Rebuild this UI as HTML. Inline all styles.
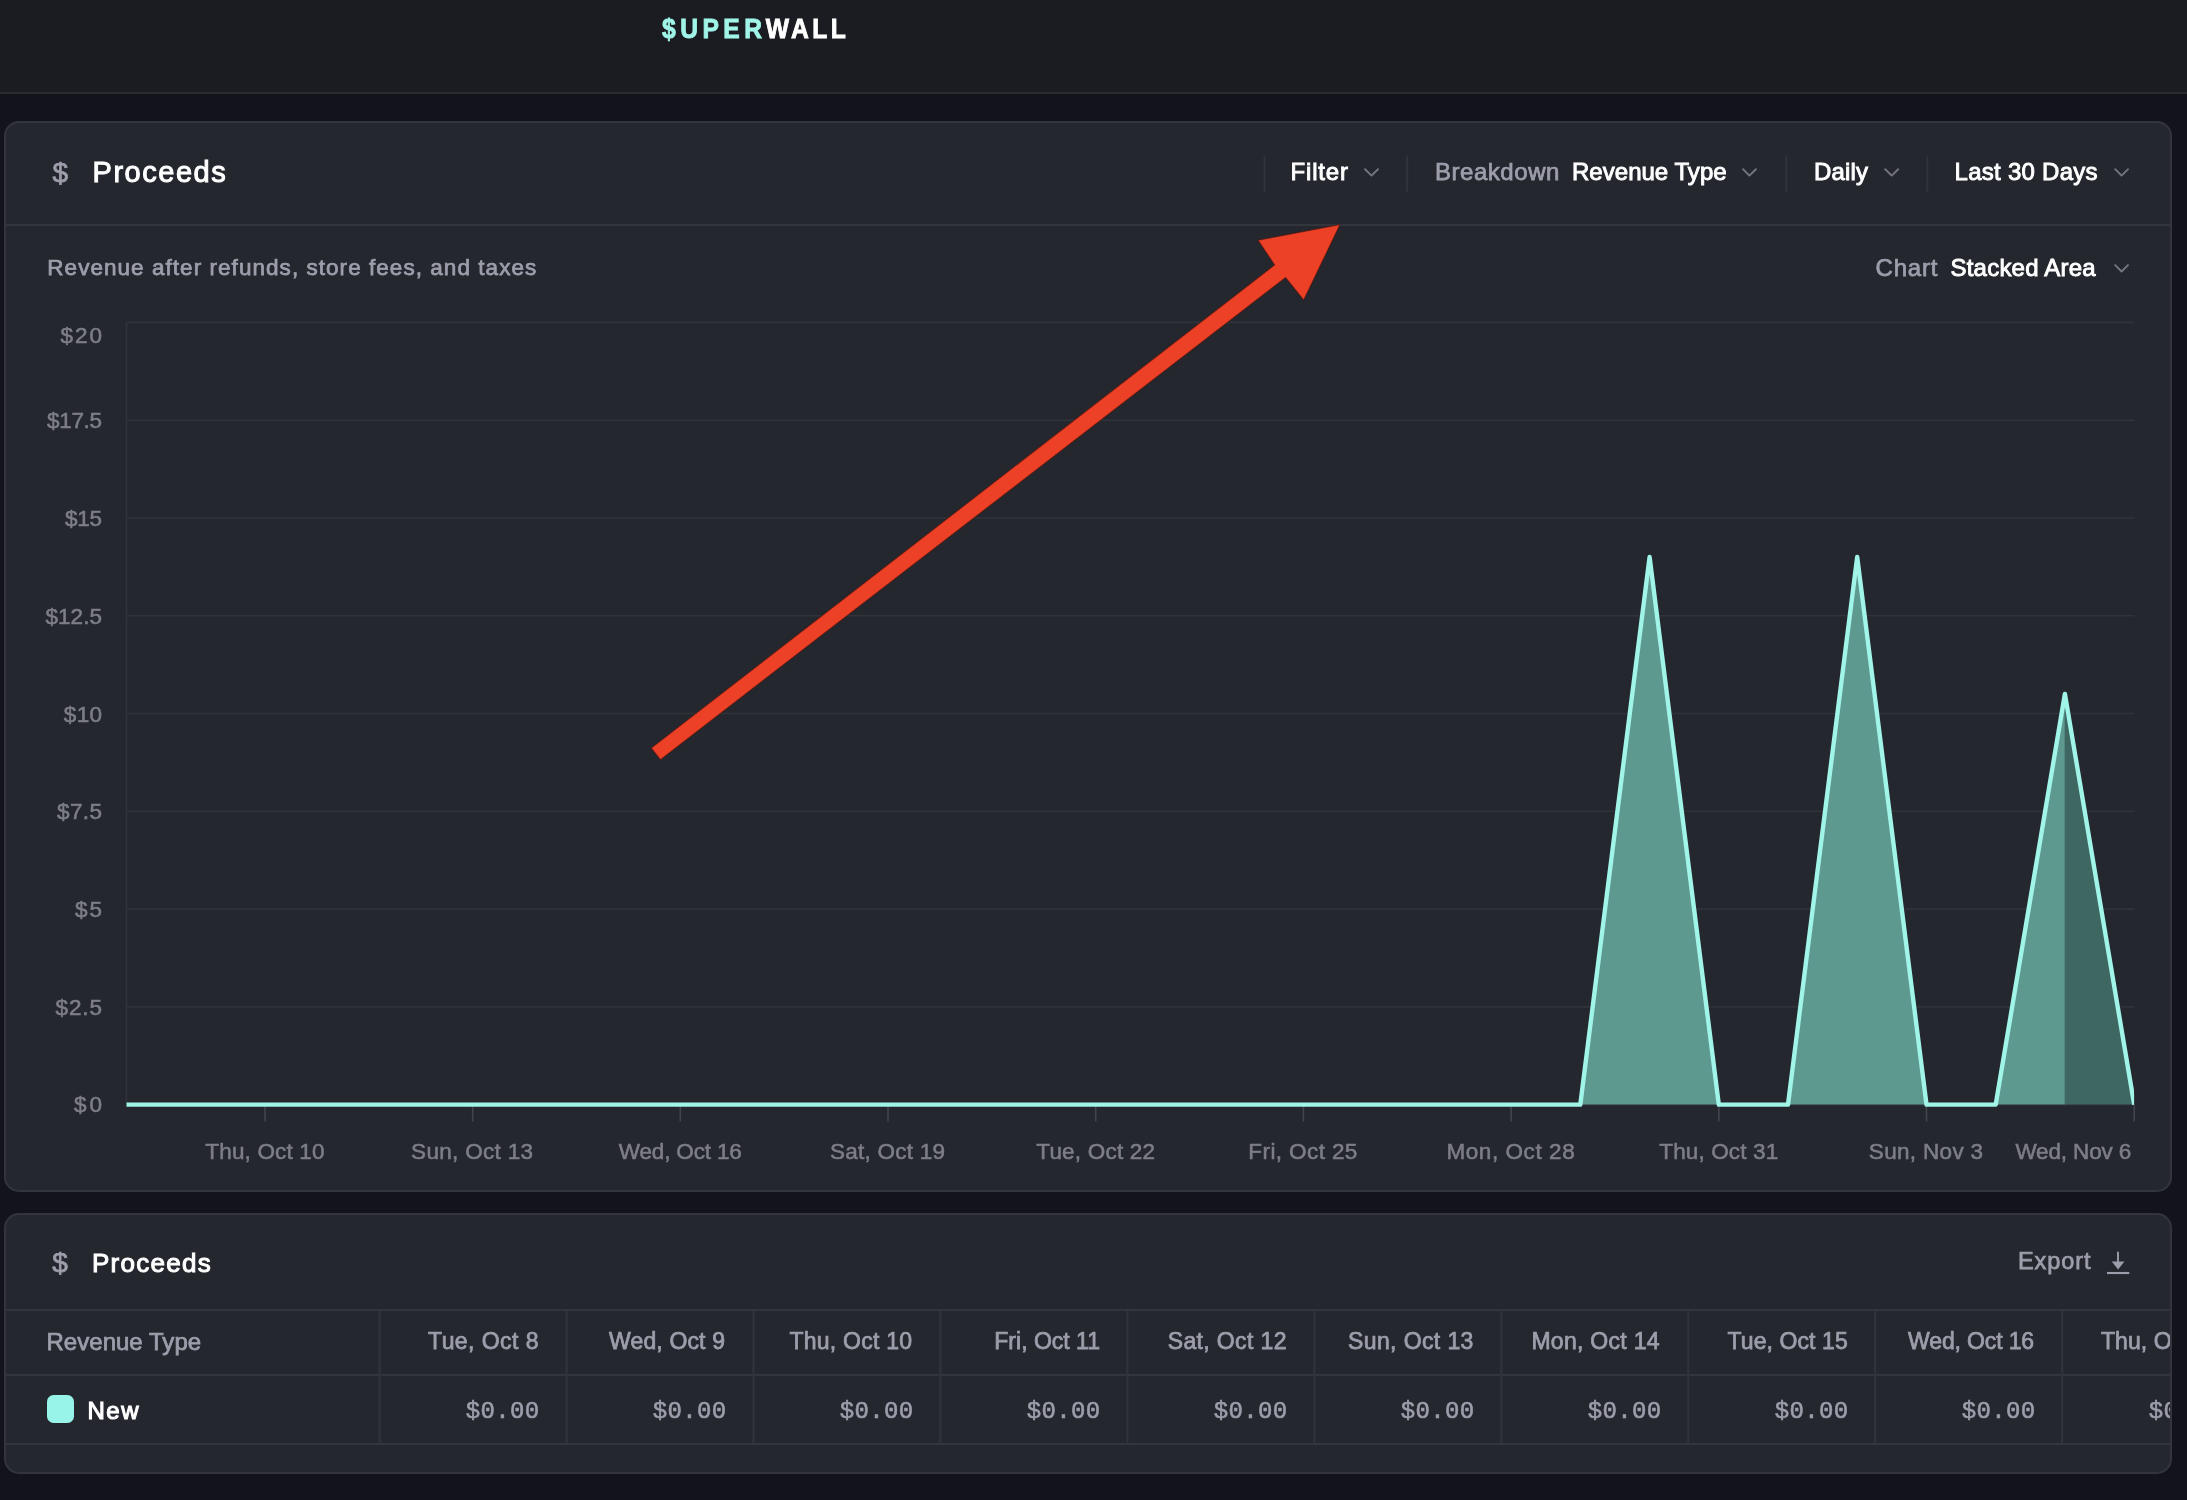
<!DOCTYPE html>
<html lang="en"><head><meta charset="utf-8"><title>Superwall - Proceeds</title><style>
html,body{margin:0;padding:0}
body{width:2187px;height:1500px;overflow:hidden;position:relative;background:#13141b;font-family:"Liberation Sans", sans-serif}
.t{position:absolute;white-space:nowrap;display:block;-webkit-text-stroke:0.75px currentColor}
.s{font-family:"Liberation Sans", sans-serif}
.m{font-family:"Liberation Mono", monospace}
.top{position:absolute;left:0;top:0;width:2187px;height:91.5px;background:#1b1c21;border-bottom:2px solid #2a2b32}
.card{position:absolute;box-sizing:border-box;background:#25272f;border:2px solid #33353d;border-radius:15px;overflow:hidden}
.hl{position:absolute;left:0;right:0;height:2px;background:#33353d}
.vl{position:absolute;width:2px;background:#33353d}
.sw{position:absolute;left:47px;top:1395.2px;width:27.3px;height:27.6px;border-radius:6.5px;background:#98f3e8}
</style></head>
<body>
<div class="top"></div>
<div class="card" style="left:4px;top:121px;width:2168px;height:1071px"><div class="hl" style="top:101px"></div></div>
<div class="card" style="left:4px;top:1213px;width:2168px;height:261px"><div class="hl" style="top:94px"></div><div class="hl" style="top:159px"></div><div class="hl" style="top:227.5px"></div></div>
<div class="sw"></div>
<svg width="2187" height="1500" viewBox="0 0 2187 1500" style="position:absolute;left:0;top:0">
<line x1="126.5" y1="322.4" x2="2134.5" y2="322.4" stroke="#31333b" stroke-width="1.6"/>
<line x1="126.5" y1="420.2" x2="2134.5" y2="420.2" stroke="#31333b" stroke-width="1.6"/>
<line x1="126.5" y1="518.0" x2="2134.5" y2="518.0" stroke="#31333b" stroke-width="1.6"/>
<line x1="126.5" y1="615.7" x2="2134.5" y2="615.7" stroke="#31333b" stroke-width="1.6"/>
<line x1="126.5" y1="713.5" x2="2134.5" y2="713.5" stroke="#31333b" stroke-width="1.6"/>
<line x1="126.5" y1="811.3" x2="2134.5" y2="811.3" stroke="#31333b" stroke-width="1.6"/>
<line x1="126.5" y1="909.1" x2="2134.5" y2="909.1" stroke="#31333b" stroke-width="1.6"/>
<line x1="126.5" y1="1006.9" x2="2134.5" y2="1006.9" stroke="#31333b" stroke-width="1.6"/>
<line x1="126.5" y1="1104.6" x2="2134.5" y2="1104.6" stroke="#31333b" stroke-width="1.6"/>
<line x1="126.5" y1="322.4" x2="126.5" y2="1104.6" stroke="#31333b" stroke-width="1.6"/>
<line x1="265.0" y1="1104" x2="265.0" y2="1121.5" stroke="#42444c" stroke-width="1.6"/>
<line x1="472.7" y1="1104" x2="472.7" y2="1121.5" stroke="#42444c" stroke-width="1.6"/>
<line x1="680.3" y1="1104" x2="680.3" y2="1121.5" stroke="#42444c" stroke-width="1.6"/>
<line x1="888.0" y1="1104" x2="888.0" y2="1121.5" stroke="#42444c" stroke-width="1.6"/>
<line x1="1095.7" y1="1104" x2="1095.7" y2="1121.5" stroke="#42444c" stroke-width="1.6"/>
<line x1="1303.4" y1="1104" x2="1303.4" y2="1121.5" stroke="#42444c" stroke-width="1.6"/>
<line x1="1511.1" y1="1104" x2="1511.1" y2="1121.5" stroke="#42444c" stroke-width="1.6"/>
<line x1="1718.8" y1="1104" x2="1718.8" y2="1121.5" stroke="#42444c" stroke-width="1.6"/>
<line x1="1926.5" y1="1104" x2="1926.5" y2="1121.5" stroke="#42444c" stroke-width="1.6"/>
<line x1="2134.2" y1="1104" x2="2134.2" y2="1121.5" stroke="#42444c" stroke-width="1.6"/>
<clipPath id="cc"><rect x="124.5" y="300" width="2009.6" height="807.5"/></clipPath>
<g clip-path="url(#cc)">
<polygon points="126.5,1104.6 126.5,1104.6 195.7,1104.6 265.0,1104.6 334.2,1104.6 403.4,1104.6 472.7,1104.6 541.9,1104.6 611.1,1104.6 680.3,1104.6 749.6,1104.6 818.8,1104.6 888.0,1104.6 957.3,1104.6 1026.5,1104.6 1095.7,1104.6 1165.0,1104.6 1234.2,1104.6 1303.4,1104.6 1372.6,1104.6 1441.9,1104.6 1511.1,1104.6 1580.3,1104.6 1649.6,557.0 1718.8,1104.6 1788.0,1104.6 1857.2,557.0 1926.5,1104.6 1995.7,1104.6 2064.9,693.9 2064.9,1104.6" fill="#5e9990"/>
<polygon points="2064.9,1104.6 2064.9,693.9 2134.2,1104.6" fill="#3e6762"/>
<polyline points="126.5,1104.6 195.7,1104.6 265.0,1104.6 334.2,1104.6 403.4,1104.6 472.7,1104.6 541.9,1104.6 611.1,1104.6 680.3,1104.6 749.6,1104.6 818.8,1104.6 888.0,1104.6 957.3,1104.6 1026.5,1104.6 1095.7,1104.6 1165.0,1104.6 1234.2,1104.6 1303.4,1104.6 1372.6,1104.6 1441.9,1104.6 1511.1,1104.6 1580.3,1104.6 1649.6,557.0 1718.8,1104.6 1788.0,1104.6 1857.2,557.0 1926.5,1104.6 1995.7,1104.6 2064.9,693.9 2134.2,1104.6" fill="none" stroke="#a0f4e8" stroke-width="4.4" stroke-linejoin="round" stroke-linecap="butt"/>
</g>
<line x1="379.60" y1="1311" x2="379.60" y2="1444" stroke="#31333b" stroke-width="2.1"/>
<line x1="566.55" y1="1311" x2="566.55" y2="1444" stroke="#31333b" stroke-width="2.1"/>
<line x1="753.50" y1="1311" x2="753.50" y2="1444" stroke="#31333b" stroke-width="2.1"/>
<line x1="940.45" y1="1311" x2="940.45" y2="1444" stroke="#31333b" stroke-width="2.1"/>
<line x1="1127.40" y1="1311" x2="1127.40" y2="1444" stroke="#31333b" stroke-width="2.1"/>
<line x1="1314.35" y1="1311" x2="1314.35" y2="1444" stroke="#31333b" stroke-width="2.1"/>
<line x1="1501.30" y1="1311" x2="1501.30" y2="1444" stroke="#31333b" stroke-width="2.1"/>
<line x1="1688.25" y1="1311" x2="1688.25" y2="1444" stroke="#31333b" stroke-width="2.1"/>
<line x1="1875.20" y1="1311" x2="1875.20" y2="1444" stroke="#31333b" stroke-width="2.1"/>
<line x1="2062.15" y1="1311" x2="2062.15" y2="1444" stroke="#31333b" stroke-width="2.1"/>
<path d="M1365.0 169.2 L1371.5 175.6 L1378.0 169.2" fill="none" stroke="#74757f" stroke-width="1.9" stroke-linecap="round" stroke-linejoin="round"/>
<path d="M1743.0 169.2 L1749.4 175.6 L1755.9 169.2" fill="none" stroke="#74757f" stroke-width="1.9" stroke-linecap="round" stroke-linejoin="round"/>
<path d="M1885.2 169.2 L1891.7 175.6 L1898.2 169.2" fill="none" stroke="#74757f" stroke-width="1.9" stroke-linecap="round" stroke-linejoin="round"/>
<path d="M2115.2 169.2 L2121.6 175.6 L2128.0 169.2" fill="none" stroke="#74757f" stroke-width="1.9" stroke-linecap="round" stroke-linejoin="round"/>
<path d="M2115.2 265.1 L2121.6 271.5 L2128.0 265.1" fill="none" stroke="#74757f" stroke-width="1.9" stroke-linecap="round" stroke-linejoin="round"/>
<line x1="1264.5" y1="155.5" x2="1264.5" y2="191.8" stroke="#31333b" stroke-width="2"/>
<line x1="1407.2" y1="155.5" x2="1407.2" y2="191.8" stroke="#31333b" stroke-width="2"/>
<line x1="1786.3" y1="155.5" x2="1786.3" y2="191.8" stroke="#31333b" stroke-width="2"/>
<line x1="1927.3" y1="155.5" x2="1927.3" y2="191.8" stroke="#31333b" stroke-width="2"/>
<g stroke="#9d9eab" fill="none" stroke-linecap="butt"><path d="M2118 1251.8 V1263" stroke-width="1.9"/><path d="M2107 1273 H2129.3" stroke-width="2.1"/><polygon points="2111.8,1261.4 2124.4,1261.4 2118.1,1269.4" fill="#9d9eab" stroke="none"/></g>
<polygon points="651.3,748.1 1274.6,264.9 1258,240.2 1340,224.6 1303.7,300.1 1285.6,277.5 660.4,759.7" fill="#ec4126" stroke="#4a130b" stroke-opacity="0.55" stroke-width="1.2" stroke-linejoin="miter"/>
</svg>
<div style="position:absolute;left:0;top:0;width:2170px;height:1500px;overflow:hidden;will-change:transform"><span class="t s" style="left:52.40px;top:154.80px;font-size:28px;line-height:36px;letter-spacing:0.000px;color:#9d9eab">$</span>
<span class="t s" style="left:92.60px;top:153.02px;font-size:29px;line-height:38px;letter-spacing:1.512px;color:#ffffff;-webkit-text-stroke-width:1.0px">Proceeds</span>
<span class="t s" style="left:1290.50px;top:156.13px;font-size:24px;line-height:31px;letter-spacing:0.832px;color:#ffffff;-webkit-text-stroke-width:0.9px">Filter</span>
<span class="t s" style="left:1435.00px;top:156.13px;font-size:24px;line-height:31px;letter-spacing:0.535px;color:#9d9eab">Breakdown</span>
<span class="t s" style="left:1572.00px;top:156.13px;font-size:24px;line-height:31px;letter-spacing:0.025px;color:#ffffff;-webkit-text-stroke-width:0.9px">Revenue Type</span>
<span class="t s" style="left:1814.00px;top:156.13px;font-size:24px;line-height:31px;letter-spacing:0.139px;color:#ffffff;-webkit-text-stroke-width:0.9px">Daily</span>
<span class="t s" style="left:1954.60px;top:156.13px;font-size:24px;line-height:31px;letter-spacing:0.266px;color:#ffffff;-webkit-text-stroke-width:0.9px">Last 30 Days</span>
<span class="t s" style="left:47.30px;top:253.10px;font-size:22.5px;line-height:29px;letter-spacing:1.045px;color:#9d9eab">Revenue after refunds, store fees, and taxes</span>
<span class="t s" style="left:1875.50px;top:252.43px;font-size:24px;line-height:31px;letter-spacing:0.820px;color:#9d9eab">Chart</span>
<span class="t s" style="left:1950.50px;top:252.23px;font-size:24px;line-height:31px;letter-spacing:0.215px;color:#ffffff;-webkit-text-stroke-width:0.9px">Stacked Area</span>
<span class="t s" style="left:60.50px;top:320.70px;font-size:22.5px;line-height:29px;letter-spacing:1.987px;color:#7d7e87;-webkit-text-stroke-width:0.55px">$20</span>
<span class="t s" style="left:47.00px;top:406.20px;font-size:22.5px;line-height:29px;letter-spacing:-0.323px;color:#7d7e87;-webkit-text-stroke-width:0.55px">$17.5</span>
<span class="t s" style="left:65.00px;top:504.00px;font-size:22.5px;line-height:29px;letter-spacing:-0.263px;color:#7d7e87;-webkit-text-stroke-width:0.55px">$15</span>
<span class="t s" style="left:45.40px;top:601.70px;font-size:22.5px;line-height:29px;letter-spacing:0.077px;color:#7d7e87;-webkit-text-stroke-width:0.55px">$12.5</span>
<span class="t s" style="left:63.80px;top:699.50px;font-size:22.5px;line-height:29px;letter-spacing:0.337px;color:#7d7e87;-webkit-text-stroke-width:0.55px">$10</span>
<span class="t s" style="left:57.00px;top:797.20px;font-size:22.5px;line-height:29px;letter-spacing:0.407px;color:#7d7e87;-webkit-text-stroke-width:0.55px">$7.5</span>
<span class="t s" style="left:75.00px;top:895.20px;font-size:22.5px;line-height:29px;letter-spacing:1.987px;color:#7d7e87;-webkit-text-stroke-width:0.55px">$5</span>
<span class="t s" style="left:55.60px;top:992.80px;font-size:22.5px;line-height:29px;letter-spacing:0.874px;color:#7d7e87;-webkit-text-stroke-width:0.55px">$2.5</span>
<span class="t s" style="left:73.90px;top:1090.00px;font-size:22.5px;line-height:29px;letter-spacing:3.087px;color:#7d7e87;-webkit-text-stroke-width:0.55px">$0</span>
<span class="t s" style="left:205.36px;top:1136.61px;font-size:22.5px;line-height:29px;letter-spacing:0.156px;color:#7d7e87;-webkit-text-stroke-width:0.55px">Thu, Oct 10</span>
<span class="t s" style="left:411.10px;top:1136.61px;font-size:22.5px;line-height:29px;letter-spacing:0.320px;color:#7d7e87;-webkit-text-stroke-width:0.55px">Sun, Oct 13</span>
<span class="t s" style="left:618.79px;top:1136.61px;font-size:22.5px;line-height:29px;letter-spacing:-0.163px;color:#7d7e87;-webkit-text-stroke-width:0.55px">Wed, Oct 16</span>
<span class="t s" style="left:830.08px;top:1136.61px;font-size:22.5px;line-height:29px;letter-spacing:0.226px;color:#7d7e87;-webkit-text-stroke-width:0.55px">Sat, Oct 19</span>
<span class="t s" style="left:1036.27px;top:1136.61px;font-size:22.5px;line-height:29px;letter-spacing:0.209px;color:#7d7e87;-webkit-text-stroke-width:0.55px">Tue, Oct 22</span>
<span class="t s" style="left:1248.36px;top:1136.61px;font-size:22.5px;line-height:29px;letter-spacing:0.400px;color:#7d7e87;-webkit-text-stroke-width:0.55px">Fri, Oct 25</span>
<span class="t s" style="left:1446.40px;top:1136.61px;font-size:22.5px;line-height:29px;letter-spacing:0.576px;color:#7d7e87;-webkit-text-stroke-width:0.55px">Mon, Oct 28</span>
<span class="t s" style="left:1659.29px;top:1136.61px;font-size:22.5px;line-height:29px;letter-spacing:0.136px;color:#7d7e87;-webkit-text-stroke-width:0.55px">Thu, Oct 31</span>
<span class="t s" style="left:1868.83px;top:1136.61px;font-size:22.5px;line-height:29px;letter-spacing:0.322px;color:#7d7e87;-webkit-text-stroke-width:0.55px">Sun, Nov 3</span>
<span class="t s" style="left:2015.40px;top:1136.61px;font-size:22.5px;line-height:29px;letter-spacing:-0.136px;color:#7d7e87;-webkit-text-stroke-width:0.55px">Wed, Nov 6</span>
<span class="t s" style="left:52.30px;top:1244.70px;font-size:28px;line-height:36px;letter-spacing:0.000px;color:#9d9eab">$</span>
<span class="t s" style="left:92.00px;top:1246.07px;font-size:26px;line-height:34px;letter-spacing:1.280px;color:#ffffff;-webkit-text-stroke-width:1.0px">Proceeds</span>
<span class="t s" style="left:2018.00px;top:1245.72px;font-size:23.5px;line-height:31px;letter-spacing:0.902px;color:#9d9eab">Export</span>
<span class="t s" style="left:46.50px;top:1325.93px;font-size:24px;line-height:31px;letter-spacing:0.025px;color:#9d9eab">Revenue Type</span>
<span class="t s" style="left:87.40px;top:1395.33px;font-size:24px;line-height:31px;letter-spacing:1.560px;color:#ffffff;-webkit-text-stroke-width:1.1px">New</span>
<span class="t s" style="left:428.00px;top:1326.21px;font-size:23px;line-height:30px;letter-spacing:0.441px;color:#9d9eab">Tue, Oct 8</span>
<span class="t s" style="left:609.00px;top:1326.21px;font-size:23px;line-height:30px;letter-spacing:0.153px;color:#9d9eab">Wed, Oct 9</span>
<span class="t s" style="left:789.40px;top:1326.21px;font-size:23px;line-height:30px;letter-spacing:0.243px;color:#9d9eab">Thu, Oct 10</span>
<span class="t s" style="left:994.30px;top:1326.21px;font-size:23px;line-height:30px;letter-spacing:0.005px;color:#9d9eab">Fri, Oct 11</span>
<span class="t s" style="left:1167.70px;top:1326.21px;font-size:23px;line-height:30px;letter-spacing:0.374px;color:#9d9eab">Sat, Oct 12</span>
<span class="t s" style="left:1348.00px;top:1326.21px;font-size:23px;line-height:30px;letter-spacing:0.393px;color:#9d9eab">Sun, Oct 13</span>
<span class="t s" style="left:1531.40px;top:1326.21px;font-size:23px;line-height:30px;letter-spacing:0.292px;color:#9d9eab">Mon, Oct 14</span>
<span class="t s" style="left:1727.50px;top:1326.21px;font-size:23px;line-height:30px;letter-spacing:0.088px;color:#9d9eab">Tue, Oct 15</span>
<span class="t s" style="left:1908.10px;top:1326.21px;font-size:23px;line-height:30px;letter-spacing:-0.142px;color:#9d9eab">Wed, Oct 16</span>
<span class="t s" style="left:2101.00px;top:1326.21px;font-size:23px;line-height:30px;letter-spacing:0.063px;color:#9d9eab">Thu, Oct 17</span>
<span class="t m" style="left:465.80px;top:1396.24px;font-size:24px;line-height:31px;letter-spacing:0.323px;color:#9d9eab;-webkit-text-stroke-width:0.6px">$0.00</span>
<span class="t m" style="left:652.80px;top:1396.24px;font-size:24px;line-height:31px;letter-spacing:0.323px;color:#9d9eab;-webkit-text-stroke-width:0.6px">$0.00</span>
<span class="t m" style="left:839.80px;top:1396.24px;font-size:24px;line-height:31px;letter-spacing:0.323px;color:#9d9eab;-webkit-text-stroke-width:0.6px">$0.00</span>
<span class="t m" style="left:1026.80px;top:1396.24px;font-size:24px;line-height:31px;letter-spacing:0.323px;color:#9d9eab;-webkit-text-stroke-width:0.6px">$0.00</span>
<span class="t m" style="left:1213.80px;top:1396.24px;font-size:24px;line-height:31px;letter-spacing:0.323px;color:#9d9eab;-webkit-text-stroke-width:0.6px">$0.00</span>
<span class="t m" style="left:1400.80px;top:1396.24px;font-size:24px;line-height:31px;letter-spacing:0.323px;color:#9d9eab;-webkit-text-stroke-width:0.6px">$0.00</span>
<span class="t m" style="left:1587.80px;top:1396.24px;font-size:24px;line-height:31px;letter-spacing:0.323px;color:#9d9eab;-webkit-text-stroke-width:0.6px">$0.00</span>
<span class="t m" style="left:1774.80px;top:1396.24px;font-size:24px;line-height:31px;letter-spacing:0.323px;color:#9d9eab;-webkit-text-stroke-width:0.6px">$0.00</span>
<span class="t m" style="left:1961.80px;top:1396.24px;font-size:24px;line-height:31px;letter-spacing:0.323px;color:#9d9eab;-webkit-text-stroke-width:0.6px">$0.00</span>
<span class="t m" style="left:2148.80px;top:1396.24px;font-size:24px;line-height:31px;letter-spacing:0.323px;color:#9d9eab;-webkit-text-stroke-width:0.6px">$0.00</span>
<div class="t s" style="left:662.30px;top:10.70px;font-size:28px;line-height:36px;font-weight:700;transform:scaleX(0.88);transform-origin:0 0;-webkit-text-stroke-width:0.9px"><span style="color:#a0f4e8;letter-spacing:5.066px">$UPER</span><span style="color:#ffffff;letter-spacing:3.901px;margin-left:-0.855px">WALL</span></div></div>
</body></html>
